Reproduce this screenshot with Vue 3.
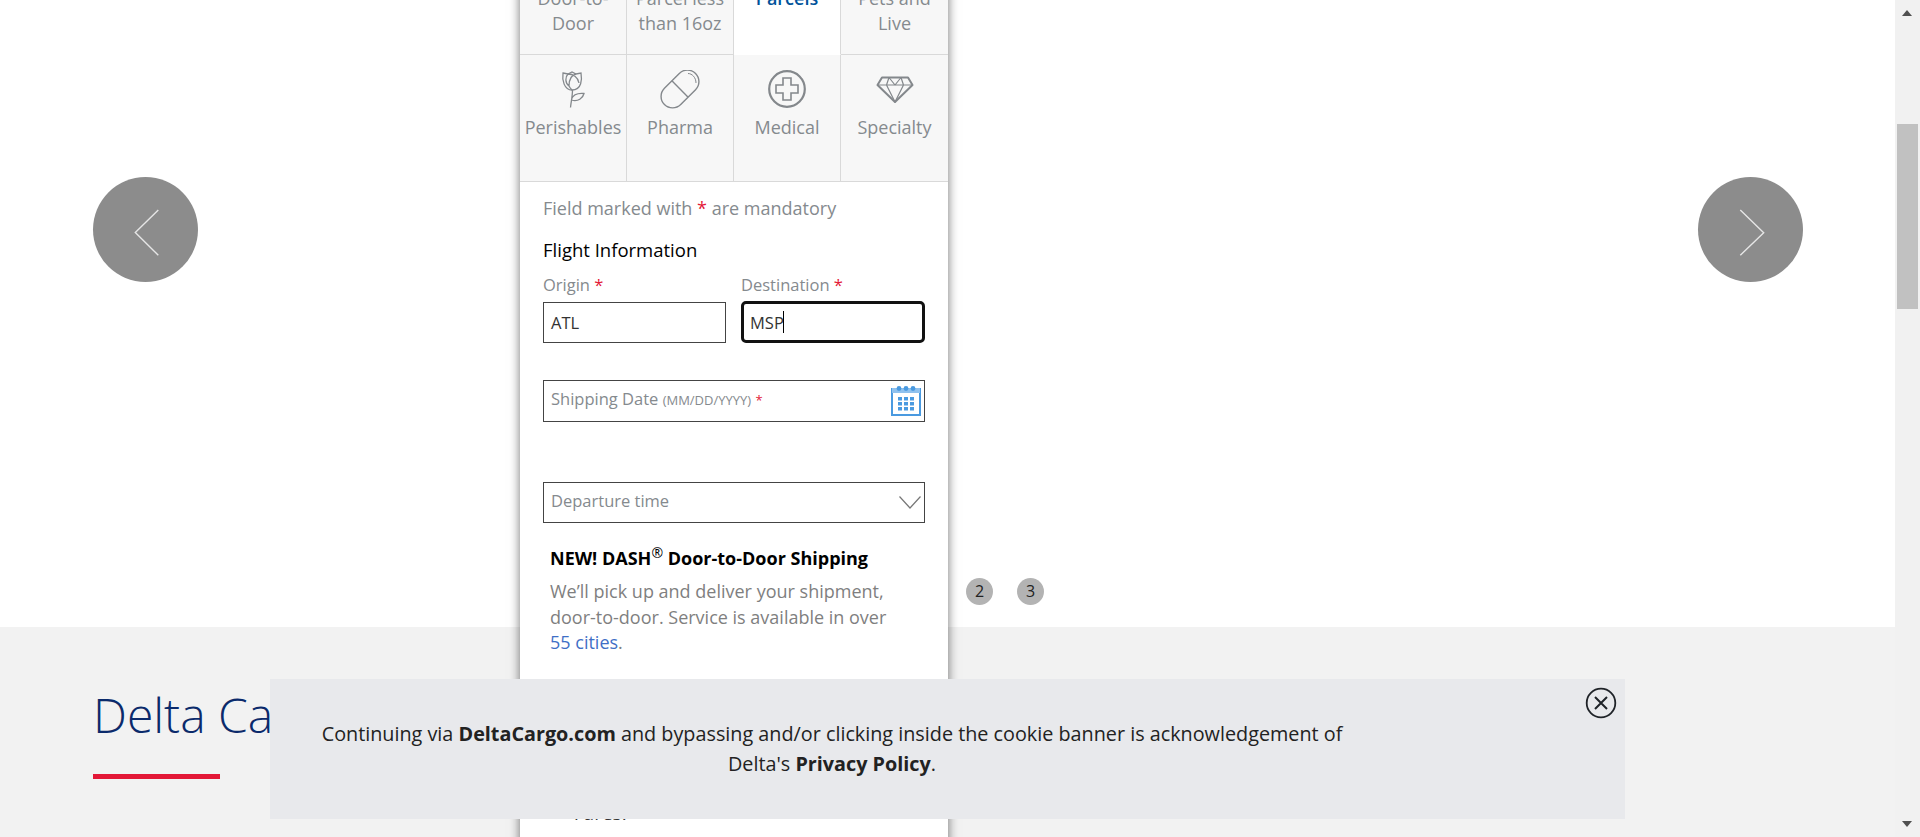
<template>
    <div class="page">
        <main class="page__main">
            <section class="hero">
                <button class="hero__nav">
                    <svg width="105" height="105" viewBox="0 0 105 105" fill="none" stroke="#e6e6e6" stroke-width="1.4">
                        <polyline points="65.3,33 42.3,55.5 65.3,78.3"></polyline>
                    </svg>
                </button>
                <button class="hero__nav">
                    <svg width="105" height="105" viewBox="0 0 105 105" fill="none" stroke="#e6e6e6" stroke-width="1.4">
                        <polyline points="42.3,33 65.7,55.7 42.3,78.3"></polyline>
                    </svg>
                </button>
                <div class="hero__dots">
                    <span v-for="n in 3" :key="n" class="hero__dot">{{ n }}</span>
                </div>
            </section>

            <section class="intro">
                <h2 class="intro__title">Delta Cargo</h2>
                <div class="intro__rule"></div>
            </section>

            <!-- Карточка бронирования поверх слайдера -->
            <div class="card">
                <div class="tabs">
                    <div v-for="t in topTabs" :key="t.label" class="tab tab--top" :class="{ 'is-active': t.active }">
                        <span class="tab__label">{{ t.label }}</span>
                    </div>

                    <div class="tab">
                        <svg class="tab__icon" width="44" height="40" viewBox="0 0 44 40" fill="none" stroke="#84888c" stroke-width="1.3">
                            <path d="M12 3l5 1 4-2 4 2 5-1c1 6 1 17-9 17-8 0-10-10-9-17z"></path>
                            <path d="M17 4c-3 3-3 9 1 12M17 4c5 0 10 3 11 9M25 4c-4 1-7 5-7 12 1 2 2 3 3 4"></path>
                            <path d="M21.5 20c0 6-1.500 12-2 17.500M20.500 29c1.500-4 6.500-6 12.500-5.500-1 4.500-6 8.500-12.500 6.500"></path>
                        </svg>
                        <span class="tab__label">Perishables</span>
                    </div>
                    <div class="tab">
                        <svg class="tab__icon" width="44" height="40" viewBox="0 0 44 40" fill="none" stroke="#84888c" stroke-width="1.4">
                            <g transform="translate(22 19) rotate(-45)">
                                <rect x="-22" y="-11.500" width="44" height="23" rx="11.500"></rect>
                                <line x1="0" y1="-11.500" x2="0" y2="11.500"></line>
                            </g>
                            <path d="M30 3.500c4 0 8 4 8 9.500" stroke-width="1"></path>
                        </svg>
                        <span class="tab__label">Pharma</span>
                    </div>
                    <div class="tab">
                        <svg class="tab__icon" width="44" height="40" viewBox="0 0 44 40" fill="none" stroke="#84888c">
                            <circle cx="22" cy="19" r="17.800" stroke-width="2.200"></circle>
                            <path d="M18 8h8v7h7v8h-7v7h-8v-7h-7v-8h7z" stroke-width="1.600"></path>
                        </svg>
                        <span class="tab__label">Medical</span>
                    </div>
                    <div class="tab">
                        <svg class="tab__icon" width="44" height="40" viewBox="0 0 44 40" fill="none" stroke="#84888c" stroke-width="1.700" stroke-linejoin="round">
                            <path d="M9 7.500h26l4.500 7.500L22 32 4.500 15z" stroke-width="2"></path>
                            <path d="M4.500 15h35M16 7.500L13.500 15 22 32l8.500-17L28 7.500M16 7.500L22 15l6-7.500" stroke-width="1.200"></path>
                        </svg>
                        <span class="tab__label">Specialty</span>
                    </div>
                </div>

                <div class="form">
                    <p class="form__note">Field marked with <span class="req">*</span> are mandatory</p>
                    <h3 class="form__heading">Flight Information</h3>

                    <div class="form__row">
                        <div class="form__col">
                            <label class="form__label">Origin <span class="req">*</span></label>
                            <div class="field">ATL</div>
                        </div>
                        <div class="form__col">
                            <label class="form__label">Destination <span class="req">*</span></label>
                            <div class="field field--focus">MSP<span class="field__caret"></span></div>
                        </div>
                    </div>

                    <div class="field field--wide field--date">
                        <span class="field__hint">Shipping Date <small>(MM/DD/YYYY)</small> <small class="req">*</small></span>
                        <svg width="30" height="30" viewBox="0 0 30 30">
                            <rect x="1" y="3" width="28" height="26" fill="#fff" stroke="#4a9ae0" stroke-width="2"></rect>
                            <rect x="1" y="2" width="28" height="5" fill="#8fc1ee"></rect>
                            <circle v-for="x in [8, 15, 22]" :key="x" :cx="x" cy="2.500" r="2.400" fill="#4a9ae0"></circle>
                            <template v-for="y in [11, 16, 21]" :key="y">
                                <rect v-for="x in [7, 13, 19]" :key="x" :x="x" :y="y" width="4" height="3.500" fill="#4a9ae0"></rect>
                            </template>
                        </svg>
                    </div>

                    <div class="field field--wide field--select">
                        <span class="field__hint">Departure time</span>
                        <svg width="22" height="13" viewBox="0 0 22 13" fill="none" stroke="#777" stroke-width="1.200">
                            <polyline points="0.500,0.500 11,12 21.500,0.500"></polyline>
                        </svg>
                    </div>

                    <div class="promo">
                        <h4 class="promo__title">NEW! DASH<sup>®</sup> Door-to-Door Shipping</h4>
                        <p class="promo__text">
                            We’ll pick up and deliver your shipment, door-to-door. Service is available in over
                            <a href="#" class="promo__link">55 cities</a>.
                        </p>
                    </div>

                    <p class="form__fares">+ Fares.</p>
                </div>
            </div>

            <!-- Cookie banner -->
            <div class="cookie">
                <p class="cookie__text">
                    Continuing via <b>DeltaCargo.com</b> and bypassing and/or clicking inside the cookie banner is acknowledgement of Delta's <b>Privacy Policy</b>.
                </p>
                <svg class="cookie__close" width="32" height="32" viewBox="0 0 32 32" fill="none" stroke="#1f2328">
                    <circle cx="16" cy="16" r="14.300" stroke-width="1.800"></circle>
                    <path d="M10 10l12 12M22 10L10 22" stroke-width="2"></path>
                </svg>
            </div>
        </main>

        <aside class="scrollbar">
            <span class="scrollbar__arrow scrollbar__arrow--up"></span>
            <span class="scrollbar__thumb"></span>
            <span class="scrollbar__arrow scrollbar__arrow--down"></span>
        </aside>
    </div>
</template>

<script setup>
const topTabs = [
    { label: 'Door-to-Door' },
    { label: 'Parcel less than 16oz' },
    { label: 'Parcels', active: true },
    { label: 'Pets and Live' },
]
</script>

<style>
html, body {
    margin: 0;
    height: 100%;
    overflow: hidden;
}
</style>

<style scoped>
.page {
    display: flex;
    height: 837px;
    overflow: hidden;
    font-family: "Open Sans", "Liberation Sans", sans-serif;
    background: #fff;
}

.page__main {
    position: relative;
    flex: 1;
    display: flex;
    flex-direction: column;
    min-width: 0;
}

/* слайдер */
.hero {
    position: relative;
    height: 627px;
    flex-shrink: 0;
    display: flex;
    justify-content: space-between;
    align-items: flex-start;
    padding: 177px 92px 0 93px;
    box-sizing: border-box;
    background: #fff;
}

.hero__nav {
    width: 105px;
    height: 105px;
    padding: 0;
    border: none;
    border-radius: 50%;
    background: #8c8c8c;
}

.hero__nav svg {
    display: block;
}

.hero__dots {
    position: absolute;
    left: 915px;
    top: 578px;
    display: flex;
    gap: 24px;
}

.hero__dot {
    width: 27px;
    height: 27px;
    border-radius: 50%;
    background: #b3b3b3;
    color: #222;
    font-size: 16px;
    line-height: 27px;
    text-align: center;
}

/* блок под слайдером */
.intro {
    flex: 1;
    background: #f2f2f2;
    padding: 55px 0 0 93px;
}

.intro__title {
    margin: 0;
    font-size: 48px;
    font-weight: 300;
    line-height: 65px;
    color: #0b2a6b;
}

.intro__rule {
    width: 127px;
    height: 5px;
    margin-top: 27px;
    background: #e31837;
}

/* карточка */
.card {
    position: absolute;
    left: 520px;
    top: -75px;
    width: 428px;
    height: 960px;
    background: #fff;
    box-shadow: 0 0 10px rgba(0, 0, 0, 0.55);
}

.tabs {
    display: grid;
    grid-template-columns: repeat(4, 107px);
    grid-template-rows: 130px 127px;
}

.tab {
    display: flex;
    flex-direction: column;
    align-items: center;
    padding: 15px 8px 0;
    box-sizing: border-box;
    background: #f7f7f7;
    border-right: 1px solid #d9d9d9;
    border-bottom: 1px solid #d9d9d9;
    text-align: center;
}

.tab:nth-child(4n) {
    border-right: none;
}

.tab:nth-child(5) {
    padding: 15px 0 0;
}

.tab--top {
    padding-top: 61px;
}

.tab--top.is-active {
    background: #fff;
    border-bottom-color: #fff;
}

.tab--top.is-active .tab__label {
    color: #00539b;
    font-weight: 600;
}

.tab__icon {
    flex-shrink: 0;
    margin-bottom: 5px;
}

.tab__label {
    font-size: 18px;
    line-height: 25px;
    color: #858a8e;
}

.form {
    padding: 0 23px;
}

.form__note {
    margin: 14px 0 0;
    font-size: 18px;
    line-height: 24px;
    color: #858a8e;
}

.req {
    color: #e31837;
}

.form__heading {
    margin: 18px 0 0;
    font-size: 18.500px;
    font-weight: 500;
    line-height: 24px;
    color: #000;
}

.form__row {
    display: flex;
    gap: 15px;
    margin-top: 11px;
}

.form__col {
    width: 184px;
}

.form__col:first-child {
    width: 183px;
}

.form__label {
    display: block;
    margin-bottom: 5px;
    font-size: 16.500px;
    line-height: 24px;
    color: #858a8e;
}

.field {
    display: flex;
    align-items: center;
    height: 41px;
    box-sizing: border-box;
    padding: 0 7px;
    border: 1px solid #444;
    font-size: 16.500px;
    color: #333;
}

.field--focus {
    border: 3px solid #111;
    border-radius: 5px;
    padding: 0 6px;
    margin-top: -1px;
    height: 42px;
}

.field__caret {
    width: 1px;
    height: 22px;
    margin-left: -1px;
    background: #000;
}

.field--wide {
    justify-content: space-between;
    margin-top: 37px;
}

.field--date {
    height: 42px;
    padding-right: 3px;
}

.field--select {
    height: 41px;
    margin-top: 60px;
    padding-right: 3px;
}

.field__hint {
    padding-bottom: 5px;
    font-size: 16.500px;
    color: #858a8e;
}

.field__hint small {
    font-size: 13px;
}

.promo {
    padding: 0 7px;
    margin-top: 20px;
}

.promo__title {
    margin: 0;
    font-size: 18px;
    font-weight: 700;
    line-height: 30px;
    color: #000;
}

.promo__title sup {
    font-size: 14px;
    font-weight: 400;
    line-height: 0;
}

.promo__text {
    max-width: 345px;
    margin: 6px 0 0;
    font-size: 18px;
    line-height: 25.600px;
    color: #7f7f7f;
}

.promo__link {
    color: #3f6fc6;
    text-decoration: none;
}

.form__fares {
    margin: 145px 0 0;
    padding-left: 3px;
    font-size: 19px;
    word-spacing: 12px;
    line-height: 24px;
    color: #333;
}

/* cookie */
.cookie {
    position: absolute;
    left: 270px;
    top: 679px;
    width: 1355px;
    height: 140px;
    display: flex;
    align-items: center;
    background: #e8e9ec;
}

.cookie__text {
    width: 1040px;
    margin: 0 0 0 42px;
    font-size: 19.800px;
    line-height: 30px;
    text-align: center;
    color: #222;
}

.cookie__close {
    position: absolute;
    right: 8px;
    top: 8px;
}

/* полоса прокрутки */
.scrollbar {
    position: relative;
    width: 25px;
    flex-shrink: 0;
    background: #f1f1f1;
}

.scrollbar__thumb {
    position: absolute;
    left: 2px;
    top: 124px;
    width: 21px;
    height: 185px;
    background: #c1c1c1;
}

.scrollbar__arrow {
    position: absolute;
    left: 7px;
    width: 0;
    height: 0;
    border-left: 5.500px solid transparent;
    border-right: 5.500px solid transparent;
}

.scrollbar__arrow--up {
    top: 10px;
    border-bottom: 6px solid #505050;
}

.scrollbar__arrow--down {
    bottom: 10px;
    border-top: 6px solid #505050;
}
</style>
